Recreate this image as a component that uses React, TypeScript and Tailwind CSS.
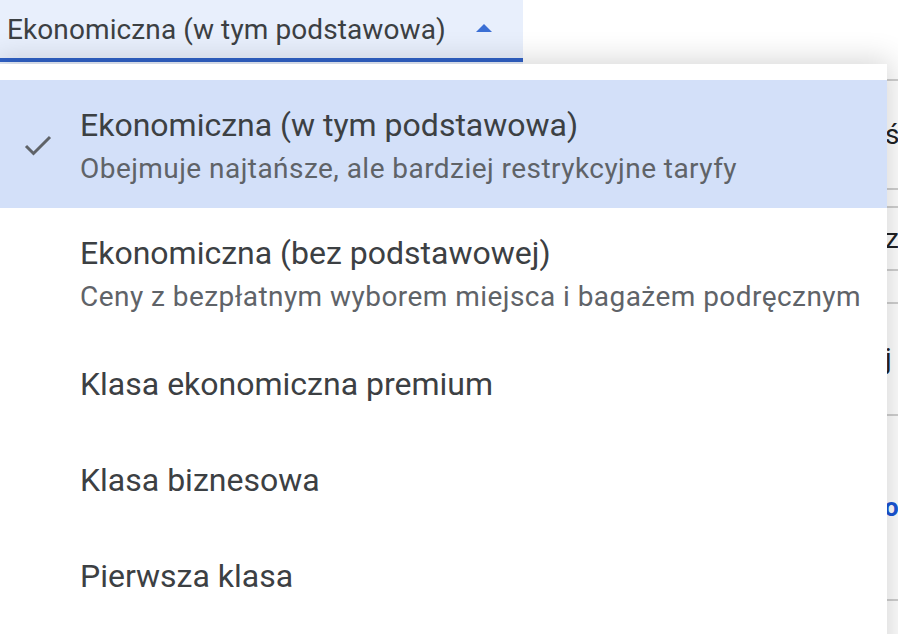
import React from "react";

const items = [
  {
    title: "Ekonomiczna (w tym podstawowa)",
    sub: "Obejmuje najtańsze, ale bardziej restrykcyjne taryfy",
    selected: true,
  },
  {
    title: "Ekonomiczna (bez podstawowej)",
    sub: "Ceny z bezpłatnym wyborem miejsca i bagażem podręcznym",
  },
  { title: "Klasa ekonomiczna premium" },
  { title: "Klasa biznesowa" },
  { title: "Pierwsza klasa" },
];

export default function App() {
  return (
    <div
      className="relative w-[898px] h-[634px] overflow-hidden bg-white"
      style={{ fontFamily: "Roboto, 'Noto Sans', sans-serif" }}
    >
      {/* Underlying page */}
      <div className="flex flex-col">
        <div className="flex h-[64px]">
          <div className="w-[523px] h-[64px] flex flex-col bg-[#e8effc]">
            <div className="flex-1 flex items-center pl-[7px] pr-[28px] gap-[29px] pt-[2px]">
              <span className="text-[28px] text-[#3c4043] tracking-[0.1px]">
                Ekonomiczna (w tym podstawowa)
              </span>
              <svg width="18" height="10" viewBox="0 0 18 10" className="mb-[4px]">
                <path d="M1 9 L9 1 L17 9 Z" fill="#3b6fd4" />
              </svg>
            </div>
            <div className="h-[4px] bg-[#3062c8] mb-[2px]" />
          </div>
        </div>
        <div className="flex justify-end">
          <div className="w-[14px] flex flex-col text-[28px] text-[#202124]">
            <div className="h-[17px] border-b-2 border-[#d0d0d0]" />
            <div className="h-[109px] flex items-center pl-[1px] border-b-2 border-[#d0d0d0]">ś</div>
            <div className="h-[18px] border-b-2 border-[#d0d0d0]" />
            <div className="h-[63px] flex items-center pl-[1px] border-b-2 border-[#d0d0d0]">z</div>
            <div className="h-[33px] border-b-2 border-[#d0d0d0]" />
            <div className="h-[112px] flex items-center pl-[1px] border-b-2 border-[#d0d0d0]">j</div>
            <div className="h-[185px] flex items-center text-[26px] text-[#1a56d6] font-bold border-b-2 border-[#d0d0d0]">o</div>
          </div>
        </div>
      </div>

      {/* Dropdown menu */}
      <div className="absolute left-0 top-[64px] w-[887px] h-[600px] bg-white pt-[16px] shadow-[0_0_28px_4px_rgba(0,0,0,0.16)]">
        {items.map((it) => (
          <div
            key={it.title}
            className={`flex items-center ${it.sub ? "h-[128px] pt-[4px]" : "h-[96px]"} ${
              it.selected ? "bg-[#d3e0f9]" : ""
            }`}
          >
            <div className="w-[80px] flex items-center justify-center pr-[4px]">
              {it.selected && (
                <svg width="30" height="24" viewBox="0 0 30 24">
                  <path d="M3 12 L10.5 19.5 L27 3" fill="none" stroke="#5f6368" strokeWidth="3" />
                </svg>
              )}
            </div>
            <div className="flex flex-col">
              <span className="text-[32px] leading-[40px] text-[#3c4043]">{it.title}</span>
              {it.sub && (
                <span className="text-[28px] leading-[36px] mt-[6px] text-[#5f6368] tracking-[0.45px]">
                  {it.sub}
                </span>
              )}
            </div>
          </div>
        ))}
      </div>
    </div>
  );
}
